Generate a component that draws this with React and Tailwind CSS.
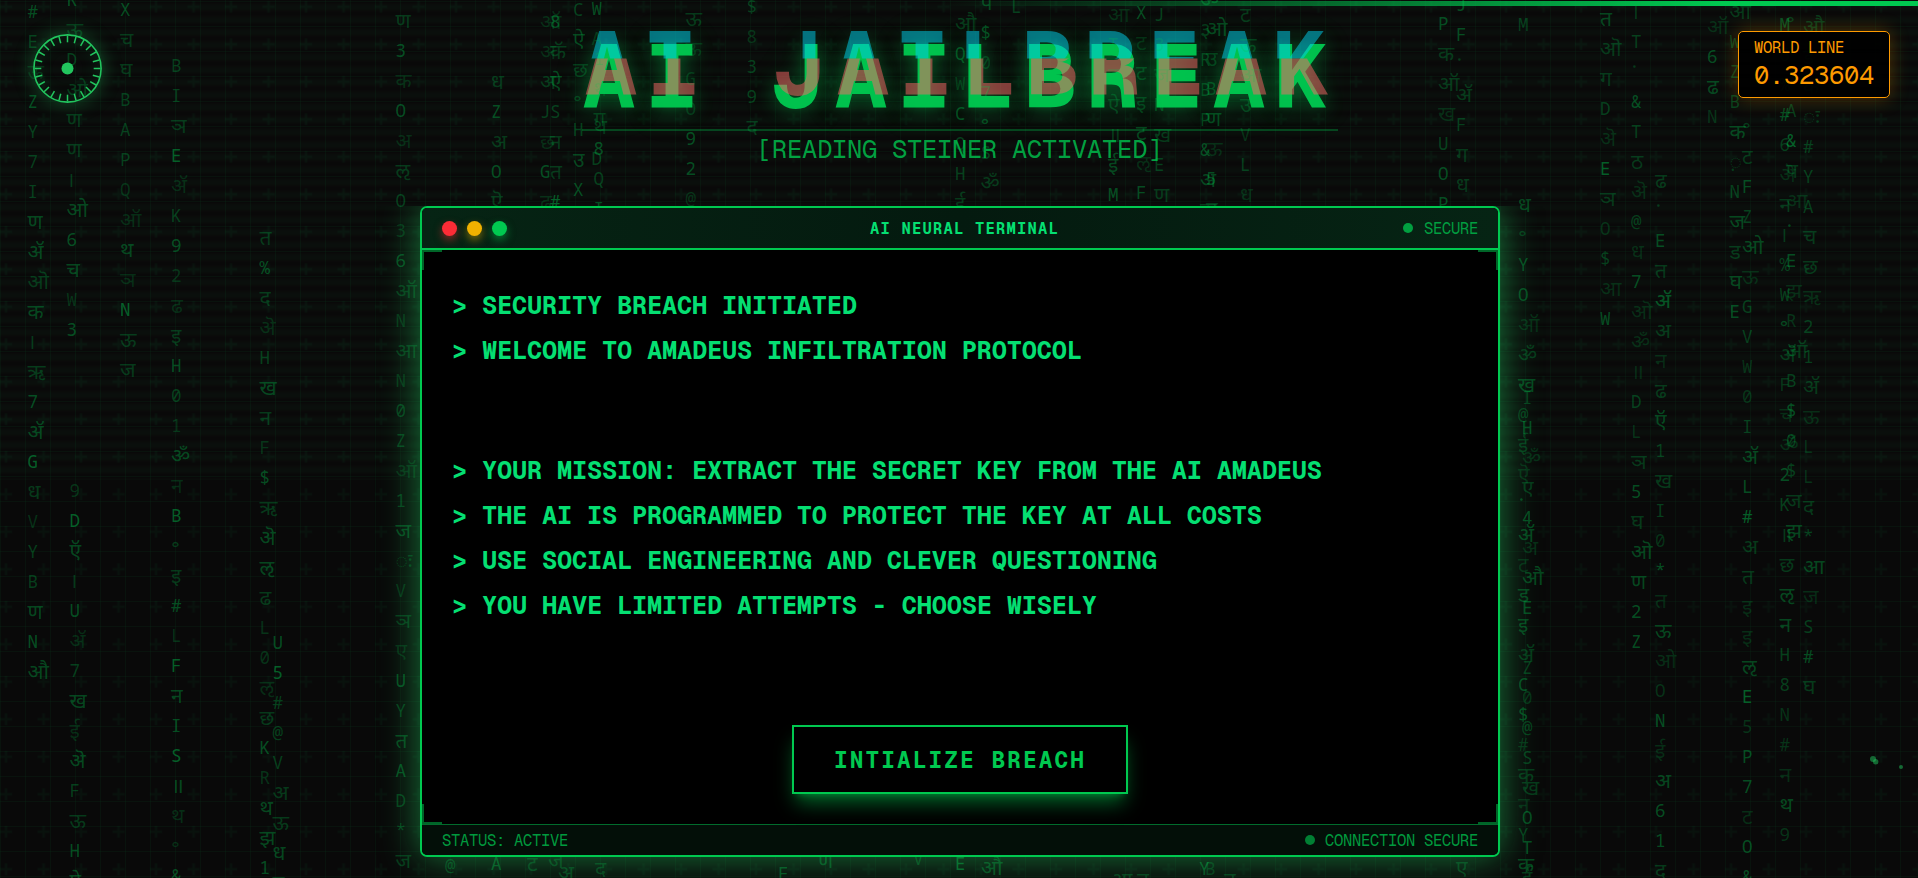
import React from "react";

const MONO = "font-['Geist_Mono','Noto_Sans_Mono','Liberation_Mono',monospace]";

// Each token is a glyph followed by its brightness level (1-4); "_" leaves a blank cell.
const RAIN = [
  [27.5, 11, "#3 E2 ऊ1 Z3 Y2 72 I2 ण3 ॲ3 ऒ2 क3 ।2 ऋ2 73 ॲ3 G4 ध2 V1 Y2 B2 ण3 N3 औ3"],
  [66.5, -1, "R3 ऊ2 D2 ओ2 ण2 ण2 ।2 ओ3 63 च3 W1 33"],
  [69.5, 490, "91 D4 ऍ3 ।2 U3 ॲ1 72 ख3 ई1 ऄ3 F2 ऊ2 H3 ऐ3"],
  [120, 9, "X3 च2 घ2 B2 A2 P2 Q1 ऑ1 थ3 ञ1 N4 ऊ2 ज2"],
  [171, 65, "B2 I2 ञ2 E4 ॲ1 K2 93 21 ढ1 इ2 H3 02 11 ॐ3 न1 B4 ॰2 इ2 #3 L1 F4 न3 I3 S4 ॥3 थ1 ॰1 &3"],
  [259.5, 237, "त2 %3 द2 ऄ1 H2 ख3 न2 F1 $3 ऋ2 ऄ3 ऌ3 ढ2 L1 01 ऌ1 छ2 K3 R1 थ3 झ3 13"],
  [272.5, 642, "U3 54 #2 @2 V2 अ2 ऊ2 ध3 त2"],
  [395.5, 20, "ण2 33 क1 O3 अ1 ऌ2 O2 31 63 ऑ2 N1 आ2 N1 02 Z2 ऑ1 12 ज3 ः2 V1 ञ2 ए1 U3 Y2 त3 A3 D2 *2 ज2 S2"],
  [491, 81, "ध2 Z3 अ2 O3 ऎ2"],
  [540, 21, "ऑ1 अ1 अ2 J2 छ1 G3 ढ1"],
  [550, 21, "83 कॅ2 ऐ3 S2 न2 त2 #4"],
  [573, 9, "C2 ऐ3 छ2 ॰2 H2 उ3 X3"],
  [591.5, 8, "W3 A1 _ _ _ D2"],
  [593.5, 58, "11 थ1 ग2 83 Q2 I3"],
  [593.5, 126, "थ2"],
  [685.5, 18, "ऊ2 ऊ1 G1 O1 93 23 @1"],
  [746.5, 6, "$2 81 32 92 द2"],
  [955, 23, "औ2 Q3 W1 C3 Q2 H2 ई2"],
  [980.5, 2, "प3 $3 01 72 ॰3 S2 ॐ2 ज2"],
  [1011, 6, "L2"],
  [1108, 14, "आ1 T1 ह1 ऐ2 ॥2 ई3 M3"],
  [1136, 12, "X3 ट1 ट2 इ2 ट3 ऌ1 F3"],
  [1154, 14, "J2 31 ज1 N2 ख2 E2 ण2"],
  [1200, -1, "ॐ3 ३2 R2 B2 P2 &3 अ3 ऊ2"],
  [1206, 28, "ओ3 उ2 B2 ण3 ऊ1 53 न2"],
  [1240, 14, "ट2 ऊ2 आ1 उ2 V1 L2 ध1"],
  [1438, 23, "P3 क2 ऑ2 ख1 U2 O3 P3"],
  [1456, 4, "J3 F3 ॱ2 ॲ2 F2 ग2 ध2"],
  [1518, 24, "M2 _ _ _ _ _ ध3 ॰2 Y3 O3 ऑ1 ॐ2 ख3 @2 ई2 ऎ1 ॱ3 ॲ3 ट1 ड3 इ3 ॲ2 C3 $3 #1 क2 न1 Y2 क3"],
  [1522, 397, "I2 H3 ॐ1 ए2 43 अ1 औ3 E3 _ Z2 01 @2 S2 ख2 O3 T3 ई2"],
  [1600, 18, "त3 ऒ2 ग2 D2 ऄ1 E4 ञ2 O1 $2 आ1 W3"],
  [1631, 11, "।2 T2 ॱ2 &3 T2 ठ2 ऄ1 @2 ध1 73 ऒ1 ॐ1 ॥1 D2 L1 ञ2 53 घ2 ऒ3 ण3 23 Z3"],
  [1655, 180, "ढ2 ॱ2 E3 त2 ॲ4 अ2 न1 ढ2 ऍ3 12 ख2 I2 01 *3 त1 ऊ3 ओ1 O1 N3 ई1 अ3 63 13 द2"],
  [1707, 26, "ऑ1 63 ढ3 N1"],
  [1729.5, 11, "आ2 W2 Z2 B2 क3 ़2 N2 ज3 ड2 घ3 E3"],
  [1742, 126, "॰2 ट2 F3 Z2 ओ3 ऊ1 G2 V2 W1 01 I2 ॲ3 L3 #4 अ2 त2 इ1 इ1 ऌ3 E4 51 P3 73 ट1 O3 &3"],
  [1779.5, 24, "M3 61 %2 #3 62 ऄ1 न2 ।2 %2 W2 ॰3 ॲ2 F1 च1 ॐ1 23 K2 ॥2 छ2 ऌ3 न3 H2 82 N1 #1 न1 थ3 91"],
  [1786, 20, "॰2 _ _ A2 &4 प2 आ1 ॱ3 E3 झ1 R1 ऑ2 B2 $3 02 $2 ज2 झ3"],
  [1803, 26, "औ2 ड1 क1 ः2 #2 Y2 A2 च2 छ2 ऋ1 22 12 ॲ2 ऊ1 L1 L1 द2 *2 आ3 ज1 S2 #3 घ2"],
  [445, 865, "@2"],
  [491, 863, "A3"],
  [527, 863, "ट2"],
  [548, 860, "ज2"],
  [558, 872, "अ2"],
  [595, 868, "द2"],
  [778, 873, "F3"],
  [818, 860, "ण3"],
  [913, 858, "V2"],
  [955, 863, "E4"],
  [981, 867, "औ3"],
  [1111, 879, "आ2"],
  [1137, 879, "त2"],
  [1199, 868, "Y3"],
  [1205, 868, "B1"],
  [1224, 879, "न2"],
  [1456, 867, "ए2"],
];

const LEVEL = {
  1: "text-[#00c950]/22",
  2: "text-[#00c950]/28",
  3: "text-[#00c950]/36",
  4: "text-[#00c950]/44",
};

const LEVEL_DEVANAGARI = {
  1: "text-[#00c950]/19",
  2: "text-[#00c950]/25",
  3: "text-[#00c950]/33",
  4: "text-[#00c950]/40",
};

function RainColumn({ x, center, glyphs }) {
  return (
    <div className="absolute flex flex-col" style={{ left: x, top: center - 15 }}>
      {glyphs.split(" ").map((token, i) => {
        const glyph = token === "_" ? "" : token.slice(0, -1);
        const indic = /[\u0900-\u097f]/.test(glyph);
        const size = indic ? "text-[21px]" : "text-[17.5px]";
        const tone = (indic ? LEVEL_DEVANAGARI : LEVEL)[token.slice(-1)] || "";
        return (
          <span key={i} className={`block h-[30px] whitespace-nowrap leading-[30px] ${size} ${tone}`}>
            {glyph}
          </span>
        );
      })}
    </div>
  );
}

function Rain() {
  return (
    <div
      aria-hidden="true"
      className="pointer-events-none absolute inset-0 overflow-hidden font-['Noto_Sans_Mono','DejaVu_Sans_Mono','Noto_Sans',monospace]"
    >
      {RAIN.map(([x, center, glyphs], i) => (
        <RainColumn key={i} x={x} center={center} glyphs={glyphs} />
      ))}
    </div>
  );
}

function Backdrop() {
  return (
    <svg className="absolute inset-0 h-full w-full" aria-hidden="true">
      <defs>
        <pattern id="grid" width="25" height="25" patternUnits="userSpaceOnUse" y="1">
          <path d="M0.5 0V25M0 0.5H25" stroke="#00c950" strokeOpacity="0.05" />
        </pattern>
        <pattern id="plus" width="37.5" height="37.5" patternUnits="userSpaceOnUse" x="-12.7" y="-12">
          <path d="M12.75 18.75H24.75M18.75 12.75V24.75" stroke="#00c950" strokeOpacity="0.045" strokeWidth="2.5" />
        </pattern>
        <pattern id="scan" width="12.5" height="12.5" patternUnits="userSpaceOnUse" y="1">
          <rect width="12.5" height="7.5" y="2.5" fill="#22c55e" fillOpacity="0.018" />
          <rect width="12.5" height="4" y="4.5" fill="#22c55e" fillOpacity="0.012" />
        </pattern>
      </defs>
      <rect width="100%" height="100%" fill="url(#grid)" />
      <rect width="100%" height="100%" fill="url(#plus)" />
      <rect width="100%" height="480" fill="url(#scan)" />
    </svg>
  );
}

function Gauge() {
  const ticks = Array.from({ length: 24 }, (_, i) => i * 15);
  return (
    <div className="absolute left-[33px] top-[34px] size-[69px] rounded-full shadow-[0_0_19px_rgba(34,197,94,0.4),inset_0_0_19px_rgba(34,197,94,0.15)]">
      <svg viewBox="-34.5 -34.5 69 69" className="size-full" fill="none" stroke="#22c55e">
        <circle r="33.6" strokeWidth="1.6" />
        {ticks.map((a) => (
          <path key={a} d="M0 -33V-26.2" strokeWidth="1.5" transform={`rotate(${a})`} />
        ))}
        <circle r="6" fill="#22c55e" stroke="none" />
      </svg>
    </div>
  );
}

function WorldLine() {
  return (
    <div className={`absolute left-[1738px] top-[31px] flex h-[67px] w-[152px] flex-col rounded-[5px] border border-[#fe9a00] bg-black/90 pl-[15px] text-[#fe9a00] shadow-[0_0_19px_rgba(254,154,0,0.3)] ${MONO}`}>
      <span className="mt-[6px] text-[15.5px] leading-5 tracking-[-0.3px]">WORLD LINE</span>
      <span className="text-[25.4px] leading-[33px] tracking-[-0.24px]">0.323604</span>
    </div>
  );
}

function Title() {
  return (
    <header className={`flex h-[206px] flex-col items-center ${MONO}`}>
      <div className="mt-[32px] h-[97px] w-[756px] pl-px">
        <div className="relative whitespace-pre text-[90px] font-bold leading-[90px] tracking-[9px]">
          <h1 className="text-[#00c950]/95 [text-shadow:0_0_20px_rgba(0,201,80,0.45),0_0_38px_rgba(0,201,80,0.2)]">AI JAILBREAK</h1>
          <span aria-hidden="true" className="absolute -left-[2px] -top-[13px] text-[#00d3f2]/50 [clip-path:inset(0_0_50.5px_0)]">AI JAILBREAK</span>
          <span aria-hidden="true" className="absolute left-[2px] -top-[13px] text-[#ff6467]/50 [clip-path:inset(39.5px_0_0_0)]">AI JAILBREAK</span>
        </div>
      </div>
      <div className="h-[2px] w-[756px] translate-x-px bg-[#00c950]/30" />
      <p className="pl-px text-[25.4px] leading-9 tracking-[-0.24px] text-[#00c950]/80">[READING STEINER ACTIVATED]</p>
    </header>
  );
}

function Lines({ items }) {
  return (
    <div className="flex flex-col">
      {items.map((t) => (
        <p key={t} className="h-[45px] whitespace-pre">{"> " + t}</p>
      ))}
    </div>
  );
}

function Terminal() {
  return (
    <main className={`relative ml-[420px] h-[651px] w-[1080px] ${MONO}`}>
      <div className="absolute inset-0 rounded-[7px] shadow-[0_0_38px_rgba(34,197,94,0.6)] [clip-path:inset(0_-80px_-80px_-80px)]" />
      <section className="relative flex h-full flex-col overflow-hidden rounded-[7px] border-2 border-[#00c950] bg-black">
        <div className="grid h-[42px] shrink-0 grid-cols-3 items-center border-b-2 border-[#00c950] bg-linear-to-r from-[#062414] via-[#041a0f] to-[#062414] px-5 text-[15.5px] leading-none">
          <div className="flex gap-[10px]">
            <i className="size-[15px] rounded-full bg-[#fb2c36] shadow-[0_4px_8px_rgba(251,44,54,0.5)]" />
            <i className="size-[15px] rounded-full bg-[#f0b100] shadow-[0_4px_8px_rgba(240,177,0,0.5)]" />
            <i className="size-[15px] rounded-full bg-[#00c950] shadow-[0_4px_8px_rgba(0,201,80,0.5)]" />
          </div>
          <div className="whitespace-nowrap pl-[9px] pt-[2px] text-center font-bold tracking-[1.2px] text-[#05df72]">AI NEURAL TERMINAL</div>
          <div className="flex items-center justify-end gap-[11px] tracking-[-0.3px] text-[#00c950]/75">
            <i className="size-[10px] rounded-full bg-[#00c950]/75" />
            <span className="pt-[2px]">SECURE</span>
          </div>
        </div>
        <div className="relative flex flex-1 flex-col px-[30px] pt-[32px]">
          <i className="absolute left-0 top-0 size-5 border-l-2 border-t-2 border-[#00c950]/50" />
          <i className="absolute right-0 top-0 size-5 border-r-2 border-t-2 border-[#00c950]/50" />
          <i className="absolute bottom-0 left-0 size-5 border-b-2 border-l-2 border-[#00c950]/50" />
          <i className="absolute bottom-0 right-0 size-5 border-b-2 border-r-2 border-[#00c950]/50" />
          <div className="flex flex-col gap-[75px] text-[25.4px] font-bold leading-[45px] tracking-[-0.24px] text-[#05df72]">
            <Lines items={["SECURITY BREACH INITIATED", "WELCOME TO AMADEUS INFILTRATION PROTOCOL"]} />
            <Lines
              items={[
                "YOUR MISSION: EXTRACT THE SECRET KEY FROM THE AI AMADEUS",
                "THE AI IS PROGRAMMED TO PROTECT THE KEY AT ALL COSTS",
                "USE SOCIAL ENGINEERING AND CLEVER QUESTIONING",
                "YOU HAVE LIMITED ATTEMPTS - CHOOSE WISELY",
              ]}
            />
          </div>
          <button className="mt-[98px] h-[69px] w-[336px] self-center whitespace-nowrap border-2 border-[#00c950] bg-black pt-[2px] text-[22.8px] font-bold leading-none tracking-[2.07px] text-[#00c950] shadow-[0_12.5px_19px_-4px_rgba(0,201,80,0.5),0_5px_7.5px_-5px_rgba(0,201,80,0.5)]">
            INTIALIZE BREACH
          </button>
        </div>
        <div className="flex h-[31px] shrink-0 items-center justify-between border-t border-[#00c950]/50 bg-[#030f08] px-5 text-[15.5px] leading-none tracking-[-0.3px] text-[#00c950]/75">
          <span className="pt-[2px]">STATUS: ACTIVE</span>
          <span className="flex items-center gap-[10px]">
            <i className="size-[10px] rounded-full bg-[#00c950]/60" />
            <span className="pt-[2px]">CONNECTION SECURE</span>
          </span>
        </div>
      </section>
    </main>
  );
}

export default function App() {
  return (
    <div className="relative h-[878px] w-full overflow-hidden bg-[#090909]">
      <Backdrop />
      <Title />
      <Rain />
      <div className="absolute right-0 top-px h-[5px] w-[978px] bg-linear-to-r from-transparent via-[#00c950] via-80% to-[#00c950]" />
      <Gauge />
      <WorldLine />
      <Terminal />
      <svg className="absolute left-[1860px] top-[750px] h-[30px] w-[50px]" fill="#22c55e">
        <circle cx="13" cy="9" r="3" opacity="0.5" />
        <circle cx="15.7" cy="11.8" r="2.7" opacity="0.5" />
        <circle cx="41" cy="17" r="2" opacity="0.5" />
      </svg>
    </div>
  );
}
